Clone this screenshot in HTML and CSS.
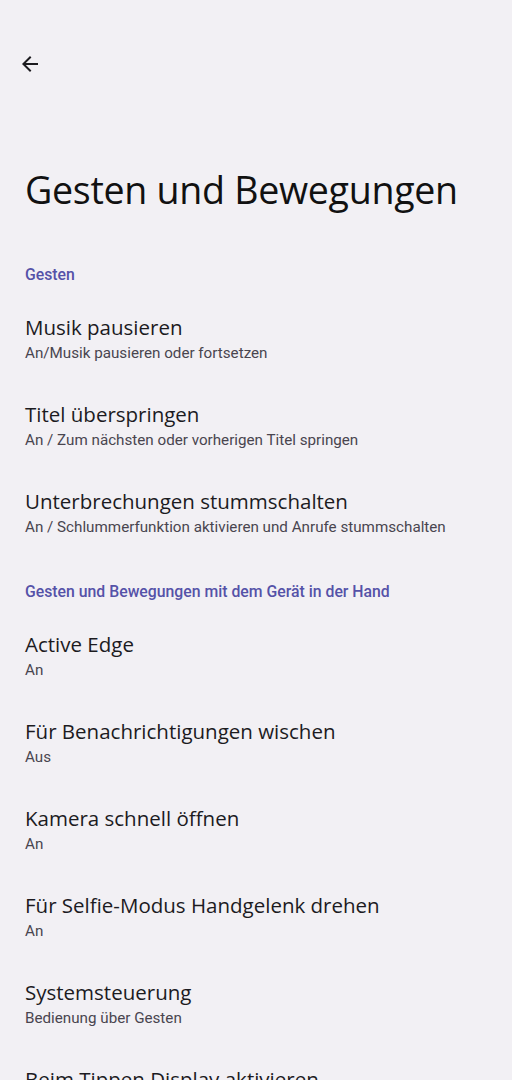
FILE: index.html
```html
<!DOCTYPE html>
<html lang="de">
<head>
<meta charset="utf-8">
<link rel="stylesheet" href="styles.css">
</head>
<body>
<div class="page">
  <header class="topbar">
    <svg class="back" width="24" height="24" viewBox="0 0 24 24"><path d="M20 11H7.83l5.59-5.59L12 4l-8 8 8 8 1.41-1.41L7.83 13H20v-2z" fill="#1c1b1f"/></svg>
  </header>
  <h1 class="title">Gesten und Bewegungen</h1>
  <section class="group">
    <div class="group-head">Gesten</div>
    <div class="item"><div class="item-title">Musik pausieren</div><div class="item-sub">An/Musik pausieren oder fortsetzen</div></div>
    <div class="item"><div class="item-title">Titel überspringen</div><div class="item-sub">An / Zum nächsten oder vorherigen Titel springen</div></div>
    <div class="item"><div class="item-title">Unterbrechungen stummschalten</div><div class="item-sub">An / Schlummerfunktion aktivieren und Anrufe stummschalten</div></div>
  </section>
  <section class="group">
    <div class="group-head">Gesten und Bewegungen mit dem Gerät in der Hand</div>
    <div class="item"><div class="item-title">Active Edge</div><div class="item-sub">An</div></div>
    <div class="item"><div class="item-title">Für Benachrichtigungen wischen</div><div class="item-sub">Aus</div></div>
    <div class="item"><div class="item-title">Kamera schnell öffnen</div><div class="item-sub">An</div></div>
    <div class="item"><div class="item-title">Für Selfie-Modus Handgelenk drehen</div><div class="item-sub">An</div></div>
    <div class="item"><div class="item-title">Systemsteuerung</div><div class="item-sub">Bedienung über Gesten</div></div>
    <div class="item"><div class="item-title">Beim Tippen Display aktivieren</div><div class="item-sub">An</div></div>
  </section>
</div>
</body>
</html>
```
FILE: styles.css
```css
html, body {
  margin: 0;
  padding: 0;
  background: #f2f0f4;
}
.page {
  width: 512px;
  height: 1080px;
  overflow: hidden;
  font-family: Roboto, "Noto Sans", sans-serif;
  color: #1c1b1f;
}
.topbar {
  height: 128px;
  padding: 52px 0 0 18px;
  box-sizing: border-box;
}
.back {
  display: block;
}
.title {
  margin: 0;
  padding: 38px 0 25px 25px;
  font-family: "Open Sans", Roboto, sans-serif;
  font-weight: 400;
  font-size: 37.6px;
  line-height: 48px;
  letter-spacing: -0.3px;
  color: #111;
}
.group {
  display: flex;
  flex-direction: column;
}
.group-head {
  padding: 26px 0 10px 25px;
  font-size: 15.8px;
  font-weight: 500;
  color: #5552a8;
  line-height: 20px;
}
.item {
  padding: 18px 25px 19px;
  display: flex;
  flex-direction: column;
  gap: 2px;
}
.item-title {
  font-family: "Open Sans", Roboto, sans-serif;
  font-size: 20.5px;
  line-height: 28px;
  color: #1c1b1f;
}
.item-sub {
  font-size: 15.2px;
  line-height: 20px;
  color: #49454f;
}
```
